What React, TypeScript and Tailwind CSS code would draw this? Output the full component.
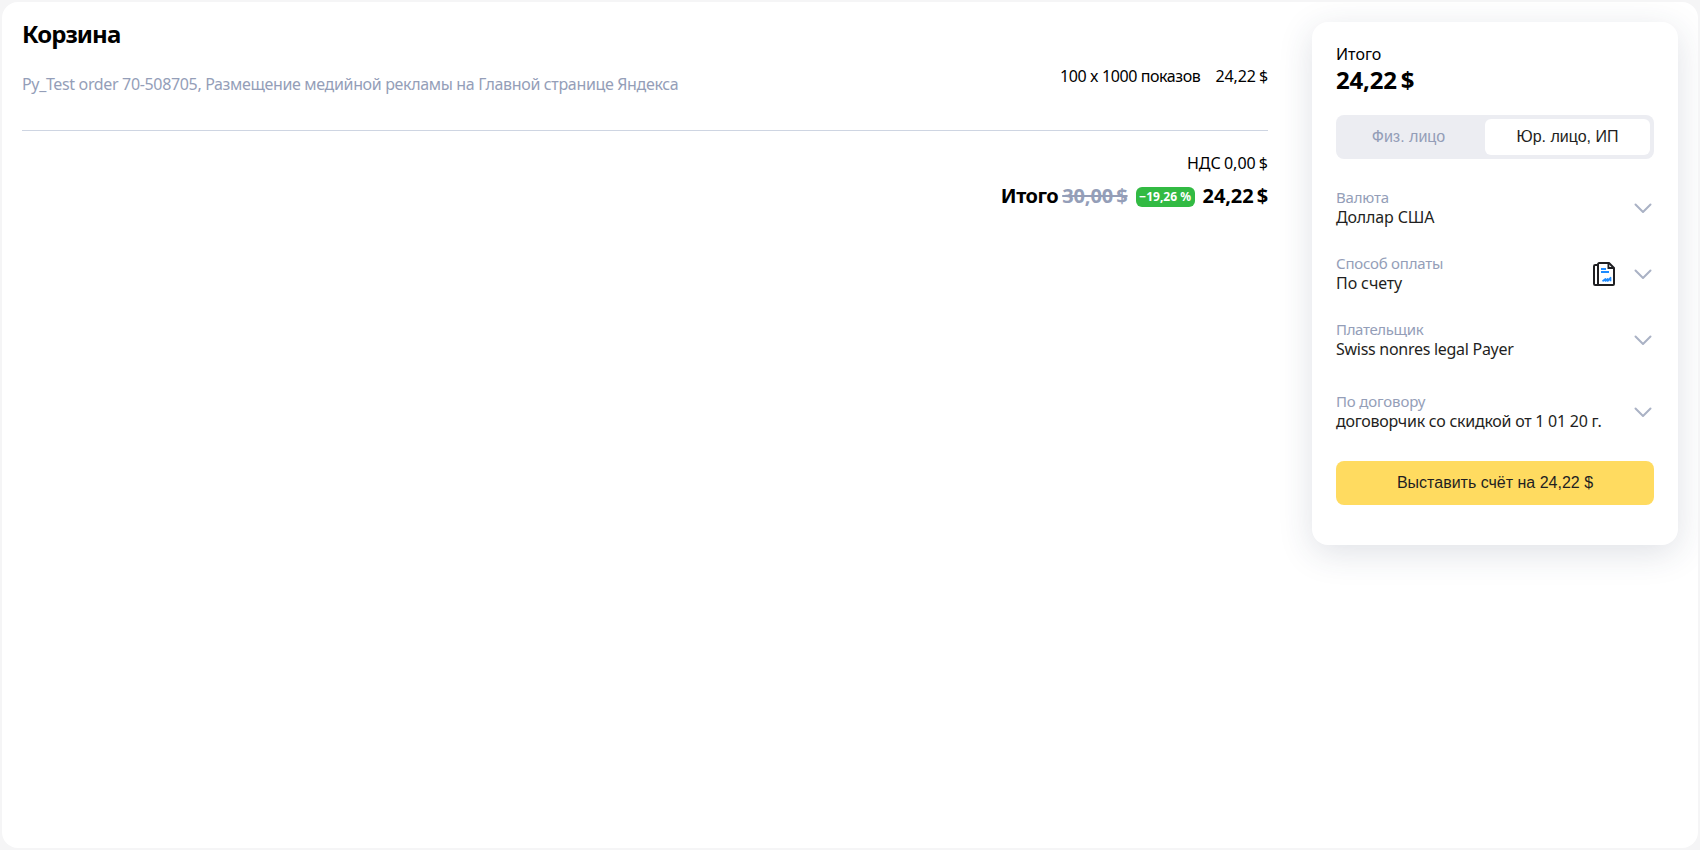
import type { ReactNode } from 'react';

function Chevron() {
  return (
    <svg className="-mr-px mt-1 h-6 w-6 shrink-0" viewBox="0 0 24 24" fill="none" stroke="#aab2c5" strokeWidth="2">
      <path d="M4.5 7.500 12 15l7.500-7.500" strokeLinecap="round" strokeLinejoin="round" />
    </svg>
  );
}

function InvoiceIcon() {
  return (
    <svg className="h-6 w-[22px] shrink-0" viewBox="0 0 22 24" fill="none">
      <path
        d="M5 3H2.200A1.200 1.200 0 0 0 1 4.200V21.800A1.200 1.200 0 0 0 2.200 23H20a1 1 0 0 0 1-1V6l-5-5H6.200A1.200 1.200 0 0 0 5 2.200V23"
        stroke="#1f1f22"
        strokeWidth="2"
        strokeLinejoin="round"
      />
      <path d="M15.400 1.500V6H20.500" stroke="#1f1f22" strokeWidth="1.800" />
      <path d="M8 7h5M8 10h8" stroke="#1e8bff" strokeWidth="2" />
      <path
        d="M9.500 19.200l3-2.200v2l2.300-2v2l2.700-3.300v3.500"
        stroke="#1e8bff"
        strokeWidth="1.700"
        strokeLinejoin="round"
      />
    </svg>
  );
}

function Field({ label, labelClass, value, valueClass, icon }: {
  label: string;
  labelClass: string;
  value: string;
  valueClass: string;
  icon?: ReactNode;
}) {
  return (
    <div className="flex h-10 items-center">
      <div className="min-w-0 grow whitespace-nowrap leading-5">
        <div className={`text-[15px] leading-5 text-[#949eb8] ${labelClass}`}>{label}</div>
        <div className={`text-base leading-5 text-[#1f1f22] ${valueClass}`}>{value}</div>
      </div>
      {icon && <div className="mr-4 flex pt-0.5">{icon}</div>}
      <Chevron />
    </div>
  );
}

export default function App() {
  return (
    <div className="h-[850px] w-[1700px] bg-[#f5f5f6] p-0.5 font-['Noto_Sans',sans-serif] text-base text-black">
      <div className="flex h-full items-start justify-between overflow-hidden rounded-2xl bg-white px-5 pt-[18px]">
        <main className="w-[1246px] whitespace-nowrap">
          <h1 className="text-2xl leading-7 font-bold tracking-[-0.95px]">Корзина</h1>
          <section className="flex h-[83px] justify-between border-b border-[#ced5e2] pt-[18px] leading-5">
            <div className="pt-2 tracking-[-0.345px] text-[#949eb8]">
              Py_Test order 70-508705, Размещение медийной рекламы на Главной странице Яндекса
            </div>
            <div className="flex gap-[15px]">
              <span className="tracking-[-0.4px]">100 x 1000 показов</span>
              <span className="tracking-[-0.1px] [word-spacing:-1px]">24,22 $</span>
            </div>
          </section>
          <section className="flex flex-col items-end pt-[22px]">
            <div className="leading-5 [word-spacing:-1px]">НДС 0,00 $</div>
            <div className="mt-[11px] flex items-center gap-2 text-xl leading-6 font-bold">
              <div className="flex gap-1">
                <span className="tracking-[-0.5px]">Итого</span>
                <span className="tracking-[-0.1px] text-[#949eb8] line-through [word-spacing:-2px]">30,00 $</span>
              </div>
              <span className="mt-0.5 flex h-5 w-[59px] items-center justify-center rounded-md bg-[#32ba43] text-xs text-white">
                −19,26 %
              </span>
              <span className="tracking-[-0.1px] [word-spacing:-2px]">24,22 $</span>
            </div>
          </section>
        </main>

        <aside className="mt-0.5 h-[523px] w-[366px] rounded-2xl bg-white px-6 pt-[22px] shadow-[0_8px_34px_rgba(40,55,90,0.15)]">
          <div className="leading-5">Итого</div>
          <div className="mt-0.5 text-2xl leading-7 font-bold tracking-[-0.2px] [word-spacing:-2px]">24,22 $</div>
          <div className="mt-[21px] flex h-11 rounded-lg bg-[#ecedf2] p-1 font-['Liberation_Sans',sans-serif]">
            <button className="w-[145px] pr-3 pl-1 text-[#949eb8]">Физ. лицо</button>
            <button className="w-[165px] rounded-md bg-white text-[#1f1f22]">Юр. лицо, ИП</button>
          </div>
          <div className="mt-7 flex flex-col gap-[26px]">
            <Field label="Валюта" labelClass="tracking-[-0.2px]" value="Доллар США" valueClass="tracking-[-0.15px]" />
            <Field
              label="Способ оплаты"
              labelClass="tracking-[-0.22px]"
              value="По счету"
              valueClass="tracking-[-0.1px]"
              icon={<InvoiceIcon />}
            />
            <Field
              label="Плательщик"
              labelClass="tracking-[-0.35px]"
              value="Swiss nonres legal Payer"
              valueClass="tracking-[-0.28px]"
            />
          </div>
          <div className="mt-8">
            <Field
              label="По договору"
              labelClass="tracking-[-0.15px]"
              value="договорчик со скидкой от 1 01 20 г."
              valueClass="tracking-[-0.26px]"
            />
          </div>
          <button className="mt-[30px] h-11 w-full rounded-lg bg-[#ffdb60] font-['Liberation_Sans',sans-serif] text-[#1f1f22]">
            Выставить счёт на 24,22 $
          </button>
        </aside>
      </div>
    </div>
  );
}
